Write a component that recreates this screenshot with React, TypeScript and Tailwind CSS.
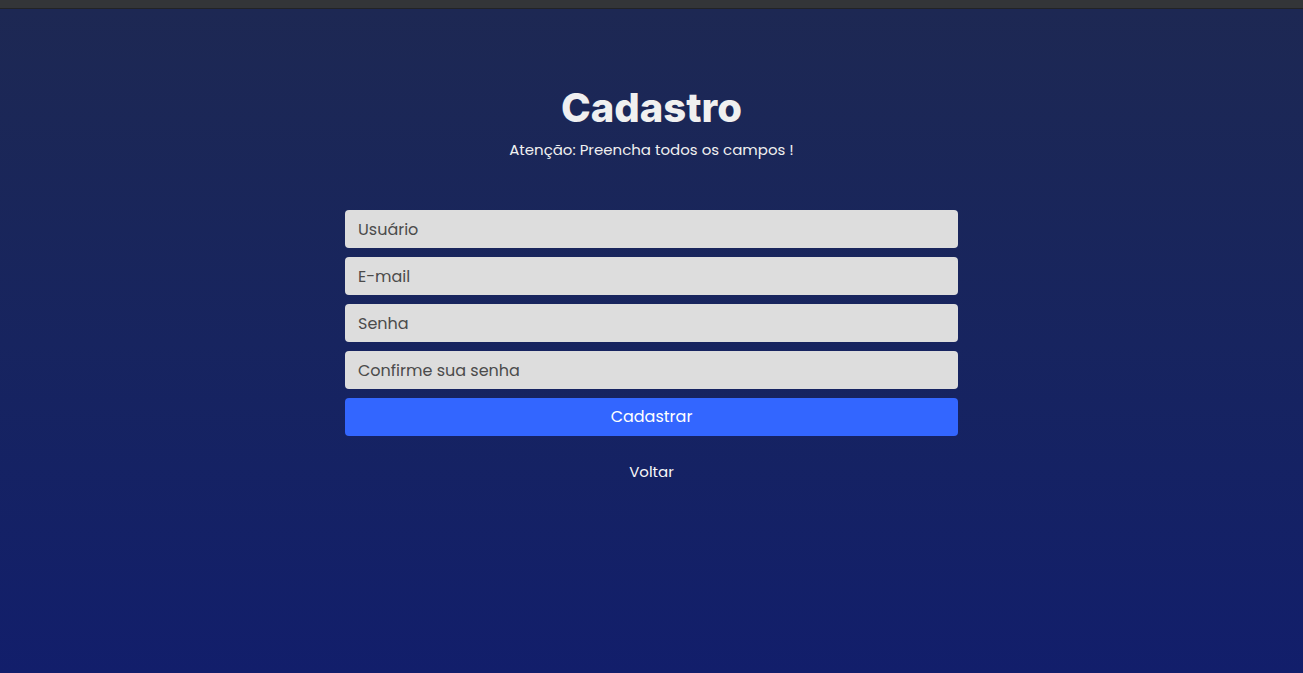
export default function App() {
  return (
    <div className="flex min-h-[673px] flex-col font-['Poppins','Noto_Sans',sans-serif]">
      <div className="h-[9px] border-b border-[#222326] bg-[#333538]" />
      <main className="flex flex-1 flex-col items-center bg-gradient-to-b from-[#1d2853] to-[#121e6b] pt-[75px]">
        <h1 className="font-['Inter',sans-serif] text-[40px] font-extrabold leading-[48px] text-[#f0f0f0]">
          Cadastro
        </h1>
        <p className="mt-[8px] text-[15px] leading-5 text-[#f0f0f0]">Atenção: Preencha todos os campos !</p>

        <form className="mt-[50px] flex w-[613px] flex-col gap-[9px]" onSubmit={(e) => e.preventDefault()}>
          <input
            placeholder="Usuário"
            className="h-[38px] rounded-[4px] bg-[#dddddd] px-[13px] text-[16px] text-[#333] outline-none placeholder:text-[#4b4b4b]"
          />
          <input
            placeholder="E-mail"
            className="h-[38px] rounded-[4px] bg-[#dddddd] px-[13px] text-[16px] text-[#333] outline-none placeholder:text-[#4b4b4b]"
          />
          <input
            type="password"
            placeholder="Senha"
            className="h-[38px] rounded-[4px] bg-[#dddddd] px-[13px] text-[16px] text-[#333] outline-none placeholder:text-[#4b4b4b]"
          />
          <input
            type="password"
            placeholder="Confirme sua senha"
            className="h-[38px] rounded-[4px] bg-[#dddddd] px-[13px] text-[16px] text-[#333] outline-none placeholder:text-[#4b4b4b]"
          />
          <button type="submit" className="h-[38px] rounded-[4px] bg-[#3366ff] text-[16px] text-white">
            Cadastrar
          </button>
        </form>

        <a href="#" className="mt-[26px] text-[15px] leading-5 text-[#f8f8f8]">
          Voltar
        </a>
      </main>
    </div>
  );
}
